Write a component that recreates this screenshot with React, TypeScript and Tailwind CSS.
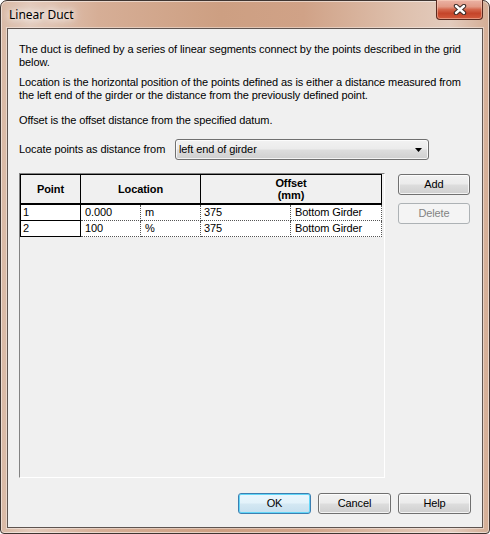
import React from "react";

const btn =
  "flex items-center justify-center h-[21px] w-[73px] rounded-[3px] border border-[#707070] bg-[linear-gradient(180deg,#f2f2f2_0%,#ebebeb_48%,#dddddd_52%,#cfcfcf_100%)] shadow-[inset_0_0_0_1px_rgba(255,255,255,0.75)] text-[11px] text-black";

function Btn({ children, def, disabled, w = "w-[73px]" }: { children: React.ReactNode; def?: boolean; disabled?: boolean; w?: string }) {
  if (disabled) {
    return (
      <div className={`flex items-center justify-center h-[21px] ${w} rounded-[3px] border border-[#adb2b5] bg-[#f4f4f4] text-[11px] text-[#838383]`}>
        {children}
      </div>
    );
  }
  if (def) {
    return (
      <div className={`flex items-center justify-center h-[21px] ${w} rounded-[3px] border border-[#3c7fb1] bg-[linear-gradient(180deg,#eaf6fd_0%,#e3f2fa_48%,#d4e8f3_52%,#c6dfee_100%)] shadow-[inset_0_0_0_1px_#62d6f8] text-[11px] text-black`}>
        {children}
      </div>
    );
  }
  return <div className={btn.replace("w-[73px]", w)}>{children}</div>;
}

export default function App() {
  return (
    <div className="w-[490px] h-[534px] bg-white font-['Liberation_Sans',Arial,sans-serif]">
      <div className="relative w-[490px] h-[534px] rounded-t-[7px] rounded-b-[4px] border border-[#3f3531] bg-[linear-gradient(90deg,#d9b9a5_0%,#e3cabb_6%,#d6ae96_20%,#cd9f82_45%,#d0a287_62%,#dec0ad_82%,#e3cbbd_92%,#d4ad95_100%)] shadow-[inset_0_0_0_1px_rgba(255,255,255,0.5)] flex flex-col">
        {/* Title bar */}
        <div className="h-[27px] flex items-center pl-[8px] text-[12px] text-black font-['Noto_Sans',sans-serif] [text-shadow:0_0_6px_#fff,0_0_10px_#fff,0_0_14px_#fff]">
          Linear Duct
        </div>

        {/* Close button */}
        <div className="absolute top-[-1px] left-[435px] w-[47px] h-[20px] rounded-b-[4px] border border-t-0 border-[#5a2a20] bg-[linear-gradient(180deg,#ebb3a5_0%,#e29a86_35%,#d4664c_50%,#c4442a_70%,#d35a3d_100%)] shadow-[inset_0_0_0_1px_rgba(255,220,200,0.45)] flex items-center justify-center">
          <svg width="14" height="11" viewBox="0 0 14 11">
            <path d="M3 2 L11 9 M11 2 L3 9" stroke="#3a2a26" strokeWidth="4.4" strokeLinecap="round" fill="none" />
            <path d="M3 2 L11 9 M11 2 L3 9" stroke="#ffffff" strokeWidth="2.4" strokeLinecap="round" fill="none" />
          </svg>
        </div>

        {/* Client area */}
        <div className="ml-[6px] w-[476px] h-[500px] border border-[#5e5450] bg-[#f0f0f0] shadow-[0_0_0_1px_rgba(255,255,255,0.4)] flex flex-col pl-[11px] pr-[11px] text-[11px] text-black tracking-[-0.1px]">
          <p className="mt-[14px] leading-[13px] whitespace-nowrap">
            The duct is defined by a series of linear segments connect by the points described in the grid
            <br />
            below.
          </p>
          <p className="mt-[7px] leading-[13px] whitespace-nowrap">
            Location is the horizontal position of the points defined as is either a distance measured from
            <br />
            the left end of the girder or the distance from the previously defined point.
          </p>
          <p className="mt-[12px] leading-[13px] whitespace-nowrap">Offset is the offset distance from the specified datum.</p>

          {/* Locate row */}
          <div className="mt-[12px] h-[21px] flex items-center">
            <div className="w-[156px] whitespace-nowrap">Locate points as distance from</div>
            <div className="w-[254px] h-[21px] rounded-[3px] border border-[#707070] bg-[linear-gradient(180deg,#f2f2f2_0%,#ebebeb_48%,#dddddd_52%,#cfcfcf_100%)] shadow-[inset_0_0_0_1px_rgba(255,255,255,0.75)] flex items-center justify-between pl-[3px] pr-[6px]">
              <span>left end of girder</span>
              <svg width="7" height="4" viewBox="0 0 7 4">
                <path d="M0 0 H7 L3.5 4 Z" fill="#000" />
              </svg>
            </div>
          </div>

          {/* Grid + side buttons */}
          <div className="mt-[13px] flex">
            <div className="w-[366px] h-[305px] border border-t-[#828282] border-l-[#828282] border-r-white border-b-white bg-[#f0f0f0]">
              {/* header */}
              <div className="flex w-[362px] border-t border-l border-black font-bold">
                <div className="w-[60px] h-[30px] border-r border-b-2 border-black flex items-center justify-center">Point</div>
                <div className="w-[120px] h-[30px] border-r border-b-2 border-black flex items-center justify-center">Location</div>
                <div className="w-[181px] h-[30px] border-r border-b-2 border-black flex flex-col items-center justify-center leading-[12px]">
                  <span>Offset</span>
                  <span>(mm)</span>
                </div>
              </div>
              {[
                ["1", "0.000", "m", "375", "Bottom Girder"],
                ["2", "100", "%", "375", "Bottom Girder"],
              ].map((r) => (
                <div key={r[0]} className="flex h-[16px] leading-[15px]">
                  <div className="w-[61px] border-l border-r border-b border-black bg-white pl-[2px]">{r[0]}</div>
                  <div className="w-[60px] border-r border-b border-dotted border-[#555] bg-white pl-[4px]">{r[1]}</div>
                  <div className="w-[60px] border-r border-b border-dotted border-[#555] bg-white pl-[4px]">{r[2]}</div>
                  <div className="w-[90px] border-r border-b border-dotted border-[#555] bg-white pl-[3px]">{r[3]}</div>
                  <div className="w-[91px] border-r border-b border-dotted border-[#555] bg-white pl-[4px]">{r[4]}</div>
                </div>
              ))}
            </div>
            <div className="ml-[13px] pt-[1px] flex flex-col gap-[8px]">
              <Btn w="w-[72px]">Add</Btn>
              <Btn w="w-[72px]" disabled>
                Delete
              </Btn>
            </div>
          </div>

          {/* bottom buttons */}
          <div className="mt-[15px] flex justify-end gap-[7px]">
            <Btn def>OK</Btn>
            <Btn>Cancel</Btn>
            <Btn>Help</Btn>
          </div>
        </div>
      </div>
    </div>
  );
}
